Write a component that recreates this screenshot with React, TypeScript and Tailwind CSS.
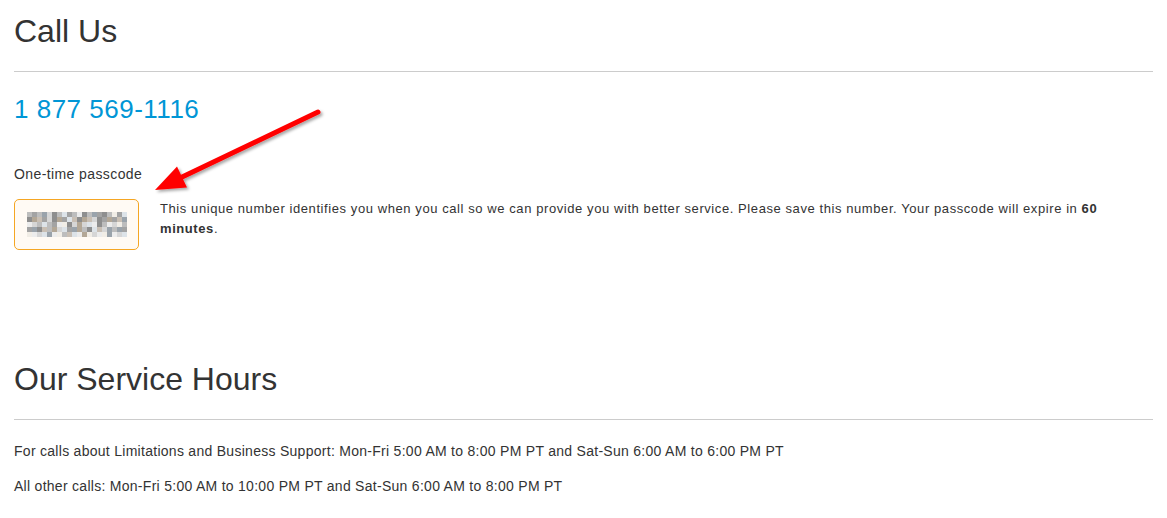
import React from "react";

const palette = ["#8e8e8e", "#a3a3a3", "#bdbdbd", "#d6d6d6", "#ececec", "#c9bfb4", "#b3a796", "#dde3e8", "#9aa3ab", "#f1ede6"];

// pixelated passcode, 20 x 5 blocks
const pattern = [
  "21283027124028102917",
  "06513061750653016158",
  "43272149036374024392",
  "18052637186207538281",
  "94378492574693498437",
];

function Passcode() {
  return (
    <div className="flex h-[51px] w-[125px] shrink-0 items-center justify-center rounded-[5px] border border-[#f5a623] bg-[#fffaf4]">
      <div className="grid grid-cols-[repeat(20,5px)]">
        {pattern.flatMap((row, r) =>
          row.split("").map((c, i) => (
            <span key={`${r}-${i}`} className="block h-[5px] w-[5px]" style={{ backgroundColor: palette[Number(c)] }} />
          ))
        )}
      </div>
    </div>
  );
}

function Arrow() {
  return (
    <svg className="pointer-events-none absolute left-0 top-0" width="340" height="210" viewBox="0 0 340 210">
      <defs>
        <filter id="sh" x="-20%" y="-20%" width="140%" height="140%">
          <feDropShadow dx="2" dy="2" stdDeviation="1.5" floodColor="#000" floodOpacity="0.35" />
        </filter>
      </defs>
      <g filter="url(#sh)">
        <line x1="318" y1="112" x2="180" y2="178" stroke="#ff0000" strokeWidth="5" strokeLinecap="round" />
        <polygon points="155,190 177,166.5 187,187.5" fill="#ff0000" />
      </g>
    </svg>
  );
}

export default function App() {
  return (
    <main className="relative min-h-screen bg-white px-[14px] pt-[15px] text-[#333] [font-family:'Liberation_Sans',Arial,sans-serif]">
      <h1 className="text-[32px] font-normal leading-none">Call Us</h1>
      <hr className="mt-[24px] border-0 border-t border-[#cccccc]" />
      <p className="mt-[24px] text-[26px] leading-none tracking-[0.5px] text-[#0096d6]">1 877 569-1116</p>
      <p className="mt-[45px] text-[14px] leading-none tracking-[0.4px]">One-time passcode</p>
      <div className="mt-[18px] flex items-start gap-[21px]">
        <Passcode />
        <p className="text-[13px] leading-[20px] tracking-[0.58px]">
          This unique number identifies you when you call so we can provide you with better service. Please save this number. Your passcode will expire in <b>60 minutes</b>.
        </p>
      </div>
      <h2 className="mt-[113px] text-[32px] font-normal leading-none">Our Service Hours</h2>
      <hr className="mt-[24px] border-0 border-t border-[#cccccc]" />
      <p className="mt-[24px] text-[14px] leading-none tracking-[0.28px]">
        For calls about Limitations and Business Support: Mon-Fri 5:00 AM to 8:00 PM PT and Sat-Sun 6:00 AM to 6:00 PM PT
      </p>
      <p className="mt-[21px] text-[14px] leading-none tracking-[0.28px]">All other calls: Mon-Fri 5:00 AM to 10:00 PM PT and Sat-Sun 6:00 AM to 8:00 PM PT</p>
      <Arrow />
    </main>
  );
}
